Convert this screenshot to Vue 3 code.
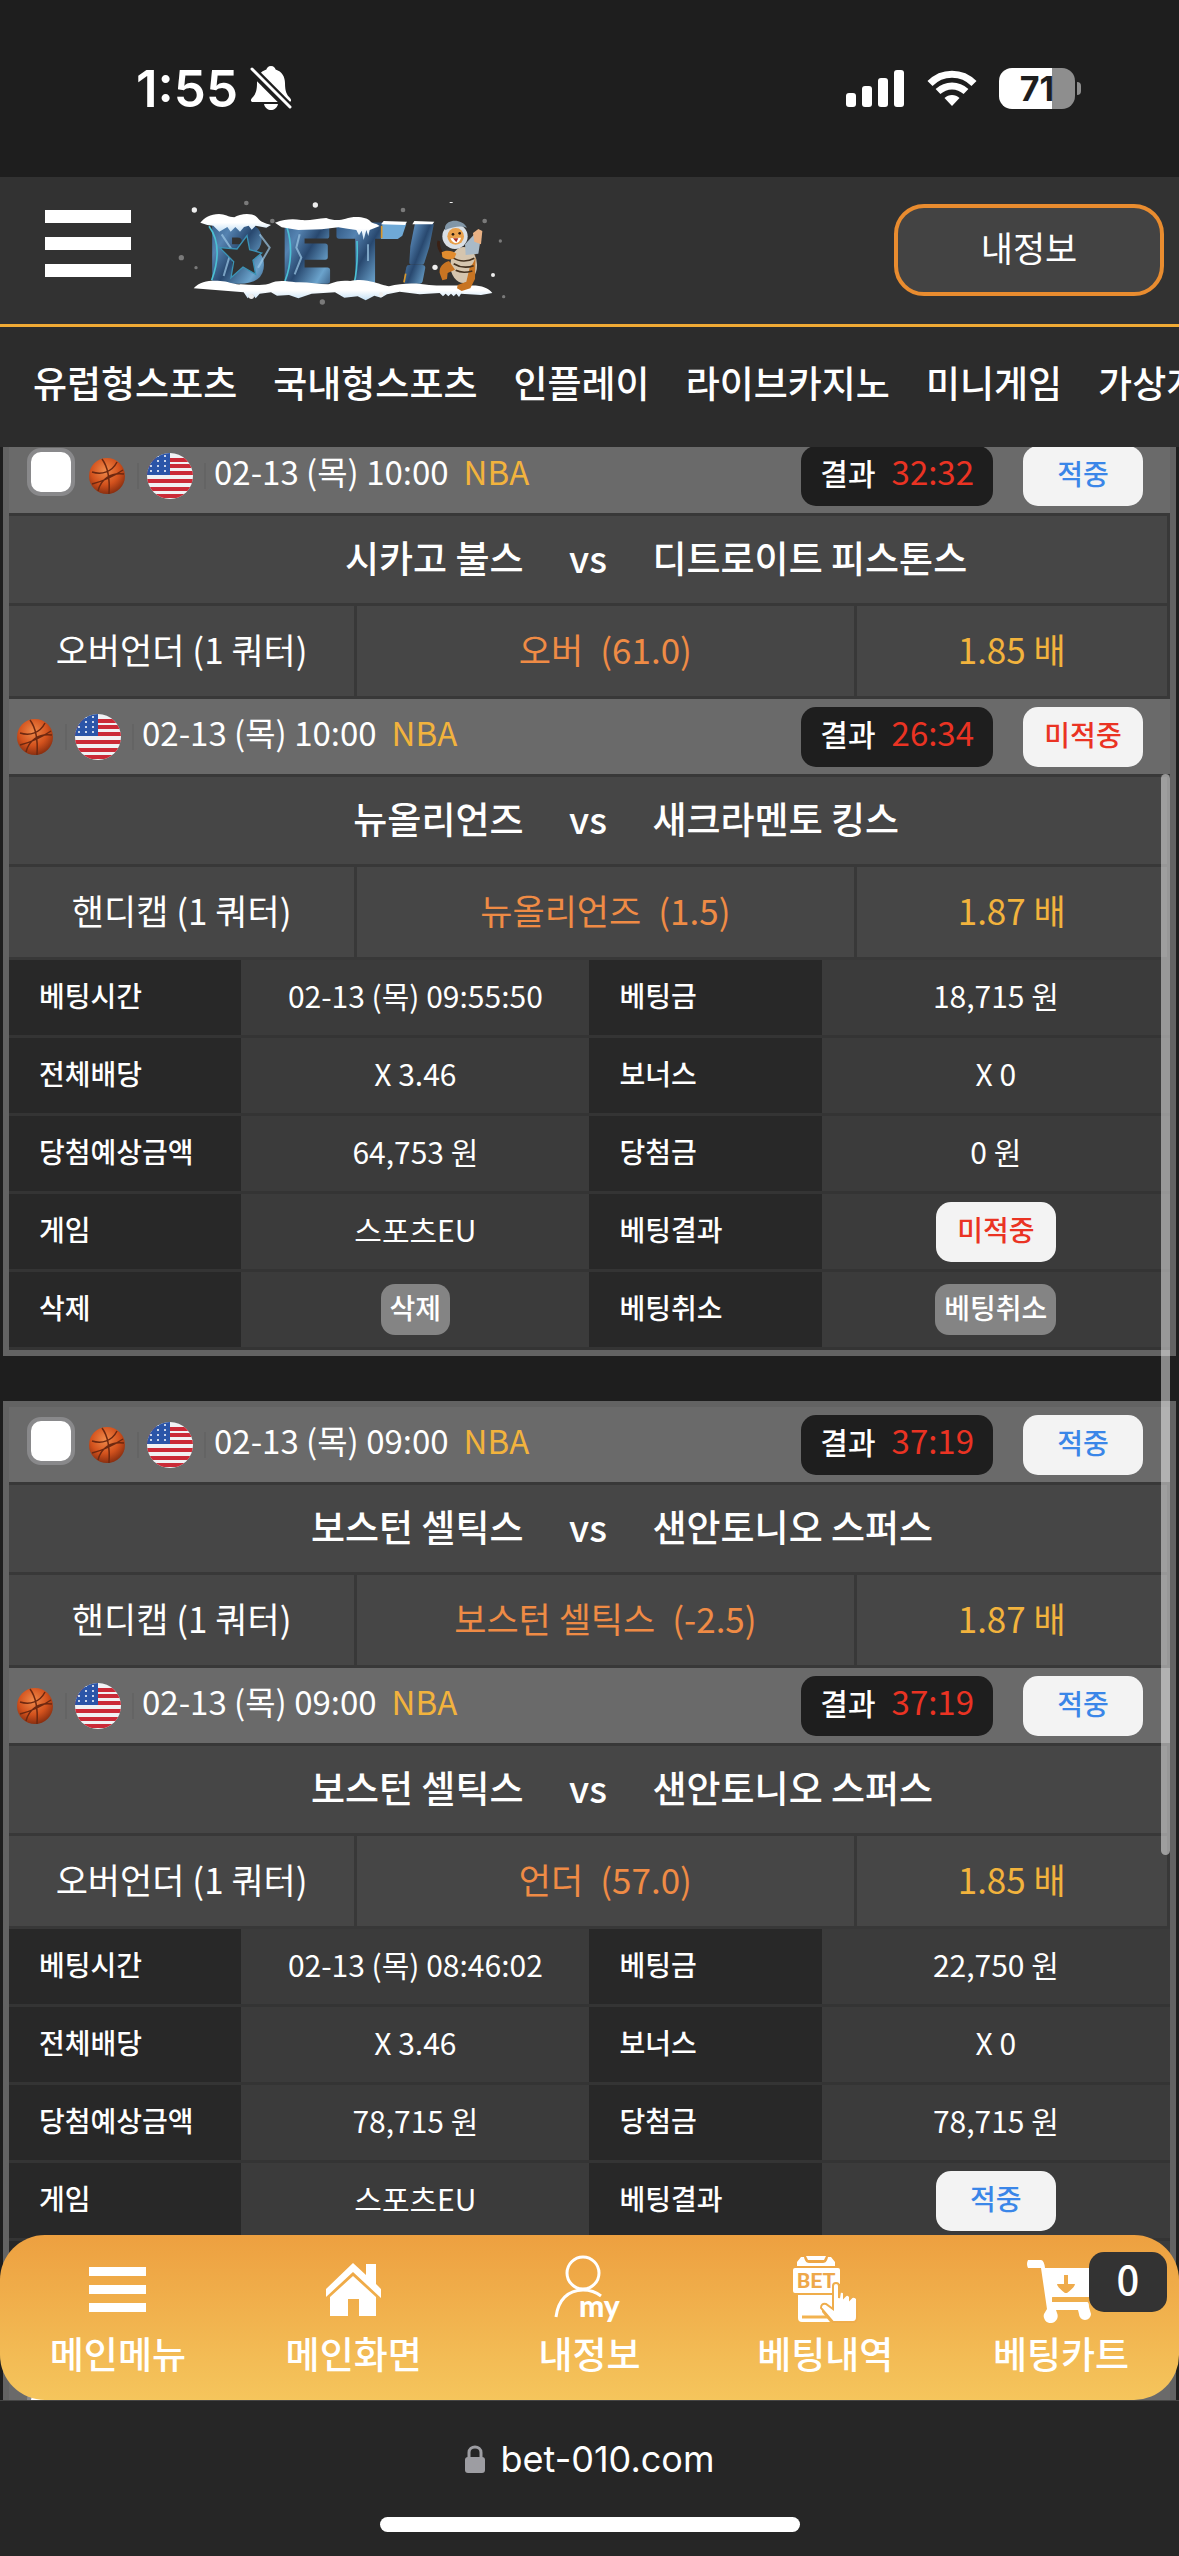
<script setup>
const menu = ['유럽형스포츠', '국내형스포츠', '인플레이', '라이브카지노', '미니게임', '가상게임']

const slips = [
  {
    id: 1,
    matches: [
      { time: '02-13 (목) 10:00', score: '32:32', hit: true, home: '시카고 불스', away: '디트로이트 피스톤스', type: '오버언더 (1 쿼터)', pick: '오버', line: '(61.0)', odds: '1.85' },
      { time: '02-13 (목) 10:00', score: '26:34', hit: false, home: '뉴올리언즈', away: '새크라멘토 킹스', type: '핸디캡 (1 쿼터)', pick: '뉴올리언즈', line: '(1.5)', odds: '1.87' },
    ],
    info: [
      ['베팅시간', '02-13 (목) 09:55:50', '베팅금', '18,715 원'],
      ['전체배당', 'X 3.46', '보너스', 'X 0'],
      ['당첨예상금액', '64,753 원', '당첨금', '0 원'],
    ],
    hit: false,
  },
  {
    id: 2,
    matches: [
      { time: '02-13 (목) 09:00', score: '37:19', hit: true, home: '보스턴 셀틱스', away: '샌안토니오 스퍼스', type: '핸디캡 (1 쿼터)', pick: '보스턴 셀틱스', line: '(-2.5)', odds: '1.87' },
      { time: '02-13 (목) 09:00', score: '37:19', hit: true, home: '보스턴 셀틱스', away: '샌안토니오 스퍼스', type: '오버언더 (1 쿼터)', pick: '언더', line: '(57.0)', odds: '1.85' },
    ],
    info: [
      ['베팅시간', '02-13 (목) 08:46:02', '베팅금', '22,750 원'],
      ['전체배당', 'X 3.46', '보너스', 'X 0'],
      ['당첨예상금액', '78,715 원', '당첨금', '78,715 원'],
    ],
    hit: true,
  },
  { id: 3, matches: [], info: [], hit: true },
]
</script>

<template>
  <div class="screen">
    <div class="status">
      <div class="clock">
        <span>1:55</span>
        <svg width="42" height="46" viewBox="0 0 42 46" aria-hidden="true">
          <path d="M21 1c3 0 4 2 4.600 3.500C32 6.500 35 12 35 18c0 9 2 12 5 15 2 2 1 4-1 4H3c-2 0-3-2-1-4 3-3 5-6 5-15C7 12 10 6.500 16.400 4.500 17 3 18 1 21 1z" fill="#fff" />
          <path d="M14 39h14c-1 4-4 6-7 6s-6-2-7-6z" fill="#fff" />
          <path d="M2 5L40 43" stroke="#1e1e1e" stroke-width="9" />
          <path d="M2 4L40 42" stroke="#fff" stroke-width="3" stroke-linecap="round" />
        </svg>
      </div>
      <div class="signals">
        <svg width="59" height="38" viewBox="0 0 59 38" fill="#fff" aria-hidden="true">
          <rect x="0" y="24" width="10" height="14" rx="3" />
          <rect x="16" y="17" width="10" height="21" rx="3" />
          <rect x="32" y="9" width="10" height="29" rx="3" />
          <rect x="48" y="1" width="10" height="37" rx="3" />
        </svg>
        <svg width="50" height="38" viewBox="0 0 50 38" fill="none" stroke="#fff" stroke-width="7" aria-hidden="true">
          <path d="M3 14.500C15 2 35 2 47 14.500" />
          <path d="M11 22.500C19 15 31 15 39 22.500" />
          <path d="M25 37l-7.500-8c4-4 11-4 15 0z" fill="#fff" stroke="none" />
        </svg>
        <div class="battery"><span>71</span></div>
      </div>
    </div>

    <header class="top">
      <button class="burger" aria-label="메뉴"><i></i><i></i><i></i></button>
      <a class="logo" href="#" aria-label="BET!">
        <svg width="340" height="120" viewBox="40 0 1020 360">
          <defs>
            <linearGradient id="ice" x1="0" y1="0" x2="1" y2="1">
              <stop offset="0" stop-color="#274d78" />
              <stop offset=".3" stop-color="#5583b1" />
              <stop offset=".5" stop-color="#28486f" />
              <stop offset=".75" stop-color="#6ba3cc" />
              <stop offset="1" stop-color="#1c3458" />
            </linearGradient>
            <linearGradient id="snow" x1="0" y1="0" x2="0" y2="1">
              <stop offset=".5" stop-color="#fff" />
              <stop offset="1" stop-color="#c4e0f5" />
            </linearGradient>
          </defs>
          <g class="word" fill="url(#ice)" stroke="url(#ice)" stroke-width="16" stroke-linejoin="round">
            <text x="144" y="270">B</text>
            <text x="362" y="270">E</text>
            <text x="537" y="270">T</text>
            <text x="724" y="270" font-style="italic">!</text>
          </g>
          <path d="M148 106c28 38 32 95 8 162M382 110c16 50 14 110-6 160M592 150c2 50 0 90-8 125" fill="none" stroke="#4cc0d3" stroke-width="5" />
          <path d="M668 98h72l-12 36-14 10h-50z" fill="#6fa9d6" />
          <path d="M666 104v38M738 248l-5 26" stroke="#d9972a" stroke-width="5" />
          <path d="M186 130l30 45-24 80M300 130l30 40-35 60M420 130l-10 40 15 30-20 50M625 160v50" fill="none" stroke="#9cc8e6" stroke-width="6" opacity=".7" />
          <path d="M262 134l8 42 36 10-26 22 8 42-38-22-36 32 8-48-42-42 52 4z" fill="#323232" stroke="#3b93b5" stroke-width="4" />
          <path d="M122 95c12-14 30-26 56-26 18 0 28 9 46 10 16-12 58-16 70 2 8 12 22 15 40 21l-14 8-32-6-12 12-9-12-14 4-12 14-14-14-14 14-10-14-24 14-18-18-18-2z" fill="url(#snow)" />
          <path d="M346 95c30-10 50-12 78-8 26 2 50-4 76-6 20 8 40 8 58 2 22-8 64-8 76 10 8 6 16 4 26 12l-30 12-4 18-6-18-8 30-6-28-8 14-8-16-26-4-28-4-50 6-70 2-50-8z" fill="url(#snow)" />
          <path d="M664 100l8-10 70 2-6 10zM758 100l6-10 60 2-6 8z" fill="#fff" />
          <path d="M102 292c20-22 50-24 80-22 22 0 40 12 62 10 30 2 60 4 84-2 26-12 50-8 80-4 34-2 66 6 98 6 26-10 40-12 66-10 30-6 50-2 72 4 20 6 30 10 44 12 40-12 90-10 120-4 40 4 80 0 120 2 34-2 58 6 70 22l-34 6-60-4-6 10-8-10-8 8-8-8-8 8-8-8-8 8-10-10-60 4-60-8-38 8-18 10-20-6-26 14-24-12-40 4-28-16-70 4-40 14-28-10-36 2-18-10-34 4-12 14-10-12-14 12-12-18z" fill="url(#snow)" />
          <g>
            <path d="M838 150c-6 16 4 26 10 40" fill="none" stroke="#3a2115" stroke-width="9" />
            <ellipse cx="912" cy="222" rx="40" ry="54" fill="#d5c5ae" />
            <path d="M868 210c-20 6-30 20-28 36l8 22 14-4 2-18 22-10zM930 230c18-20 20-38 18-50l-2 84-14 28-26 8-14-8 2-10 26-10z" fill="#c87422" />
            <path d="M880 200c20 14 46 12 64 2M882 218c20 12 44 12 60 6M888 238c16 8 36 6 50 2" fill="none" stroke="#43311f" stroke-width="5" />
            <path d="M846 184c10-8 34-6 44 4l-6 14c-14 6-28 4-36-4z" fill="#e28c2e" />
            <circle cx="886" cy="136" r="38" fill="#d9dfe5" />
            <path d="M856 108c6-24 50-26 66 2-18-6-40-4-66 8z" fill="#8196a7" />
            <circle cx="888" cy="136" r="25" fill="#e9a04b" />
            <path d="M872 142c8 20 28 18 32-2z" fill="#fff" />
            <path d="M880 142h16l-6 12z" fill="#a72c22" />
            <circle cx="880" cy="130" r="4" fill="#2a1c14" /><circle cx="900" cy="127" r="4" fill="#2a1c14" />
            <path d="M916 160l28-30 20 8-8 50-38 4z" fill="#a9bac8" />
            <path d="M940 126l16-12 12 6-4 40-20-8z" fill="#e9b184" />
          </g>
          <g fill="#eee">
            <circle cx="104" cy="57" r="8" /><circle cx="467" cy="42" r="8" /><circle cx="275" cy="316" r="8" />
            <circle cx="664" cy="311" r="7" /><circle cx="826" cy="229" r="8" /><circle cx="1000" cy="252" r="6" />
            <rect x="870" y="33" width="9" height="3" />
          </g>
          <g fill="#7a7a7a">
            <circle cx="65" cy="200" r="8" /><circle cx="109" cy="230" r="5" /><circle cx="260" cy="36" r="7" />
            <circle cx="338" cy="90" r="7" /><circle cx="730" cy="57" r="7" /><circle cx="975" cy="90" r="7" />
            <circle cx="1022" cy="150" r="5" /><circle cx="1032" cy="317" r="5" /><circle cx="488" cy="333" r="8" />
          </g>
        </svg>
      </a>
      <button class="my">내정보</button>
    </header>

    <nav class="menu">
      <a v-for="item in menu" :key="item" href="#">{{ item }}</a>
    </nav>

    <div class="body">
      <main class="list">
        <article v-for="slip in slips" :key="slip.id" class="slip">
          <section v-for="(m, i) in slip.matches" :key="i">
            <div class="head">
              <input v-if="i === 0" type="checkbox" :aria-label="'베팅 선택 ' + slip.id" />
              <svg class="ball" viewBox="0 0 38 38" aria-hidden="true">
                <defs>
                  <radialGradient id="orange" cx=".45" cy=".35" r=".65">
                    <stop offset="0" stop-color="#f08a4a" />
                    <stop offset=".6" stop-color="#d3521d" />
                    <stop offset="1" stop-color="#8a2f10" />
                  </radialGradient>
                </defs>
                <circle cx="19" cy="19" r="18" fill="url(#orange)" />
                <path d="M4 15c10 3 20 0 25-10M14 2c6 8 8 20 7 35M4 27c12-3 22-8 31-14M10 34c3-12 13-19 26-17" fill="none" stroke="#6d2810" stroke-width="1.500" />
              </svg>
              <i class="bar"></i>
              <svg class="flag" viewBox="0 0 46 46" aria-hidden="true">
                <defs><clipPath id="round"><circle cx="23" cy="23" r="23" /></clipPath></defs>
                <g clip-path="url(#round)">
                  <rect width="46" height="46" fill="#f1f1f3" />
                  <path d="M0 7h46M0 13h46M0 20h46M0 28h46M0 36h46M0 43h46" stroke="#cb2a37" stroke-width="4" />
                  <rect width="23" height="22" fill="#2b55a8" />
                  <g fill="#fff">
                    <circle v-for="n in 12" :key="n" :cx="4 + ((n - 1) % 3) * 7" :cy="3 + Math.floor((n - 1) / 3) * 5" r="1" />
                  </g>
                </g>
              </svg>
              <i class="bar"></i>
              <span class="time">{{ m.time }}</span>
              <span class="league">NBA</span>
              <span class="score">결과 <b>{{ m.score }}</b></span>
              <span class="badge" :class="{ miss: !m.hit }">{{ m.hit ? '적중' : '미적중' }}</span>
            </div>
            <div class="teams">
              <span class="home">{{ m.home }}</span>
              <span class="vs">vs</span>
              <span>{{ m.away }}</span>
            </div>
            <div class="bet">
              <span>{{ m.type }}</span>
              <span class="pick">{{ m.pick }}<em>{{ m.line }}</em></span>
              <span class="odds">{{ m.odds }} 배</span>
            </div>
          </section>
          <div v-if="!slip.matches.length" class="head">
            <input type="checkbox" aria-label="베팅 선택" />
          </div>
          <table v-if="slip.info.length">
            <tbody>
              <tr v-for="r in slip.info" :key="r[0]">
                <th scope="row">{{ r[0] }}</th>
                <td>{{ r[1] }}</td>
                <th scope="row">{{ r[2] }}</th>
                <td>{{ r[3] }}</td>
              </tr>
              <tr>
                <th scope="row">게임</th>
                <td>스포츠EU</td>
                <th scope="row">베팅결과</th>
                <td class="control"><span class="badge" :class="{ miss: !slip.hit }">{{ slip.hit ? '적중' : '미적중' }}</span></td>
              </tr>
              <tr>
                <th scope="row">삭제</th>
                <td class="control"><button class="chip">삭제</button></td>
                <th scope="row">베팅취소</th>
                <td class="control"><button class="chip">베팅취소</button></td>
              </tr>
            </tbody>
          </table>
        </article>
      </main>
      <div class="thumb"></div>

      <nav class="dock">
        <a href="#">
          <svg width="58" height="70" viewBox="0 0 58 70" fill="#fff"><path d="M0 12h57v9H0zM0 30h57v9H0zM0 48h57v9H0z" /></svg>
          메인메뉴
        </a>
        <a href="#">
          <svg width="56" height="70" viewBox="0 0 56 70" fill="#fff">
            <path d="M27 8l13 12V9h10v20l5 5v9L27 17 0 42v-8z" />
            <path d="M27 21l23 21v19H33V44H22v17H4V42z" />
          </svg>
          메인화면
        </a>
        <a href="#">
          <svg width="70" height="70" viewBox="0 0 70 70" fill="none" stroke="#fff" stroke-width="3">
            <circle cx="29" cy="18" r="16" />
            <path d="M2 62C4 45 14 35 29 35c7 0 13 2 18 6" />
            <text class="mini" x="25" y="62" fill="#fff" stroke="none">my</text>
          </svg>
          내정보
        </a>
        <a href="#">
          <svg width="66" height="70" viewBox="0 0 66 70" fill="#fff">
            <path d="M9 2h3c1 5 3 6 6 6h12c3 0 5-1 6-6h3l4 5v4H5V7z" />
            <path d="M14 1h20l-2 4H16z" />
            <path d="M1 15q0-2 2-2h43q2 0 2 2v14h-5l-3 9H3q-2 0-2-2z" />
            <text class="tiny" x="5" y="33" fill="#eea84a">BET</text>
            <path d="M6 40h34v16l-5-3-5 1v3l8 10H10q-4 0-4-4z" />
            <path d="M10 62h27" stroke="#f2b350" stroke-width="3" />
            <path d="M41 31q0-3 3-3t3 3v12l1-6q3-1 4 1v4l2-2q3-1 4 2v2l2-2q4-1 5 2v18q0 5-4 5H41L29 53q0-5 5-4l7 5z" stroke="#efad4c" stroke-width="2" />
          </svg>
          베팅내역
        </a>
        <a href="#">
          <svg width="70" height="70" viewBox="0 0 70 70" fill="#fff">
            <path d="M2 5h13q3 0 4 8h50v29H26l1 5h34q2 0 2 5l2 7a6 6 0 1 1-12 0l-1-4H30l1 3a7 7 0 1 1-13 1l3-5-6-41H2q-2-4 0-8z" />
            <path d="M26 43h40v4H26z" fill="#efae4c" />
            <path d="M38 20h4v9h7q0 3-8 9h-2q-8-6-8-9h7z" fill="#efab4b" />
          </svg>
          베팅카트
          <span class="count">0</span>
        </a>
      </nav>
    </div>

    <footer class="safari">
      <div class="url">
        <svg width="20" height="28" viewBox="0 0 20 28" aria-hidden="true">
          <path d="M4 13V7.500C4 0 16 0 16 7.500V13" fill="none" stroke="#9d9da2" stroke-width="3" />
          <rect x="0" y="12" width="20" height="16" rx="3" fill="#9d9da2" />
        </svg>
        bet-010.com
      </div>
      <div class="grip"></div>
    </footer>
  </div>
</template>

<style>
body {
  margin: 0;
  background: #1e1e1e;
}
</style>

<style scoped>
* {
  box-sizing: border-box;
}
.screen {
  display: flex;
  flex-direction: column;
  height: 100vh;
  overflow: hidden;
  background: #1e1e1e;
  color: #fff;
  font-family: "Noto Sans CJK KR", sans-serif;
  font-size: 37px;
  line-height: 1;
}
button {
  font: inherit;
  color: #fff;
  border: 0;
  padding: 0;
}
a {
  color: #fff;
  text-decoration: none;
}
.status {
  flex: none;
  display: flex;
  justify-content: space-between;
  height: 177px;
  padding: 66px 104px 0 136px;
  font-family: Inter, sans-serif;
}
.clock {
  display: flex;
  align-items: center;
  gap: 12px;
  height: 44px;
  font-size: 51px;
  font-weight: 600;
}
.signals {
  display: flex;
  align-items: center;
  gap: 22px;
  height: 44px;
}
.battery {
  position: relative;
  width: 76px;
  height: 41px;
  border-radius: 13px;
  background: linear-gradient(90deg, #fff 70%, #8e8e8e 70%);
  color: #1e1e1e;
  font-size: 34px;
  font-weight: 700;
  line-height: 41px;
  text-align: center;
}
.battery::after {
  content: "";
  position: absolute;
  right: -6px;
  top: 14px;
  width: 4px;
  height: 13px;
  border-radius: 0 4px 4px 0;
  background: #8e8e8e;
}
.top {
  flex: none;
  display: flex;
  align-items: center;
  height: 150px;
  padding: 0 15px 0 45px;
  border-bottom: 3px solid #f0aa35;
  background: #323232;
}
.burger {
  display: flex;
  flex-direction: column;
  gap: 14px;
  width: 86px;
  margin-bottom: 14px;
  background: none;
}
.burger i {
  height: 13px;
  background: #fff;
}
.logo {
  margin-left: 42px;
  height: 120px;
}
.word {
  font-family: "DejaVu Sans", sans-serif;
  font-weight: 700;
  font-size: 232px;
}
.my {
  margin-left: auto;
  width: 270px;
  height: 92px;
  margin-bottom: 2px;
  padding-bottom: 6px;
  border: 4px solid #e98c2f;
  border-radius: 30px;
  background: #434343;
  font-size: 35px;
}
.menu {
  flex: none;
  display: flex;
  align-items: center;
  gap: 36px;
  height: 120px;
  padding: 0 0 10px 33px;
  background: #2c2c2c;
  font-weight: 500;
  white-space: nowrap;
  overflow: hidden;
}
.body {
  position: relative;
  flex: 1;
  min-height: 0;
  overflow: hidden;
}
.list {
  display: flex;
  flex-direction: column;
  gap: 45px;
  margin: -15px 3px 0;
}
.slip {
  border: 6px solid #636363;
}
.head {
  display: flex;
  align-items: center;
  height: 78px;
  padding: 0 27px 0 7px;
  border-bottom: 3px solid #383838;
  background: #6a6a6a;
  font-size: 33px;
  white-space: nowrap;
}
.head input {
  appearance: none;
  width: 48px;
  height: 48px;
  margin: 0 13px 8px 11px;
  border: 4px solid #89898b;
  border-radius: 14px;
  background: #fff;
}
.ball {
  width: 38px;
  height: 38px;
}
.flag {
  width: 46px;
  height: 46px;
}
.bar {
  width: 2px;
  height: 26px;
  margin: 0 8px 0 11px;
  background: #646464;
}
.time {
  padding-bottom: 8px;
}
.league {
  margin-left: 15px;
  padding-bottom: 8px;
  color: #f2b33d;
}
.score {
  display: flex;
  align-items: center;
  gap: 16px;
  height: 60px;
  margin-left: auto;
  padding: 0 19px 8px;
  border-radius: 15px;
  background: #1e1e1e;
  font-size: 30px;
  font-weight: 500;
}
.score b {
  color: #ea3323;
  font-size: 33px;
  font-weight: 400;
}
.badge {
  display: inline-flex;
  align-items: center;
  justify-content: center;
  width: 120px;
  height: 60px;
  padding-bottom: 6px;
  border-radius: 15px;
  background: #f3f3f3;
  color: #3a86e8;
  font-size: 28px;
  font-weight: 500;
  vertical-align: middle;
}
.head .badge {
  margin-left: 30px;
}
.badge.miss {
  color: #ea3323;
}
.teams {
  display: grid;
  grid-template-columns: 1fr 129px 1fr;
  align-items: center;
  height: 90px;
  padding-bottom: 4px;
  border: 0 solid #383838;
  border-width: 0 3px 3px 0;
  background: #464646;
  font-weight: 500;
}
.home {
  text-align: right;
}
.vs {
  text-align: center;
}
.bet {
  display: grid;
  grid-template-columns: 30% 43% 27%;
  height: 93px;
  border-bottom: 3px solid #383838;
  background: #464646;
  font-size: 35px;
}
.bet span {
  display: flex;
  align-items: center;
  justify-content: center;
  padding-bottom: 6px;
  border-right: 3px solid #383838;
}
.bet .pick {
  gap: 17px;
  color: #ef8b45;
}
.pick em {
  font-style: normal;
}
.bet .odds {
  color: #f2b33d;
}
table {
  width: 100%;
  table-layout: fixed;
  border-collapse: separate;
  border-spacing: 0;
}
th,
td {
  height: 78px;
  padding: 0 0 6px;
  border-bottom: 3px solid #343434;
  vertical-align: middle;
}
th {
  width: 20%;
  padding-left: 30px;
  background: #282828;
  font-size: 28px;
  font-weight: 500;
  text-align: left;
}
td {
  width: 30%;
  background: #3b3b3b;
  font-size: 30px;
  text-align: center;
}
td.control {
  padding: 0;
}
.chip {
  height: 51px;
  padding: 0 9px 5px;
  border-radius: 14px;
  background: #848484;
  font-size: 28px;
  font-weight: 500;
  vertical-align: middle;
}
.thumb {
  position: absolute;
  top: 327px;
  right: 9px;
  width: 9px;
  height: 1081px;
  border-radius: 5px;
  background: rgba(255, 255, 255, 0.48);
}
.dock {
  position: absolute;
  left: 0;
  right: 0;
  bottom: 0;
  display: flex;
  height: 165px;
  padding-top: 20px;
  border-radius: 45px;
  background: linear-gradient(#eda040, #f5c55c);
  font-weight: 500;
}
.dock a {
  position: relative;
  flex: 1;
  display: flex;
  flex-direction: column;
  align-items: center;
  gap: 10px;
}
.mini {
  font-family: Lato, sans-serif;
  font-size: 30px;
  font-weight: 900;
}
.tiny {
  font-family: Roboto, sans-serif;
  font-size: 21px;
  font-weight: 700;
}
.count {
  position: absolute;
  top: -3px;
  right: 12px;
  width: 78px;
  height: 60px;
  border-radius: 15px;
  background: #333;
  font-size: 40px;
  line-height: 52px;
  text-align: center;
}
.safari {
  flex: none;
  display: flex;
  flex-direction: column;
  align-items: center;
  justify-content: space-between;
  height: 156px;
  padding: 40px 0 24px;
  border-top: 1px solid #444;
  background: #262626;
  font-family: Inter, sans-serif;
  font-size: 36px;
}
.url {
  display: flex;
  align-items: center;
  gap: 16px;
}
.grip {
  width: 420px;
  height: 15px;
  border-radius: 8px;
  background: #fff;
}
</style>
